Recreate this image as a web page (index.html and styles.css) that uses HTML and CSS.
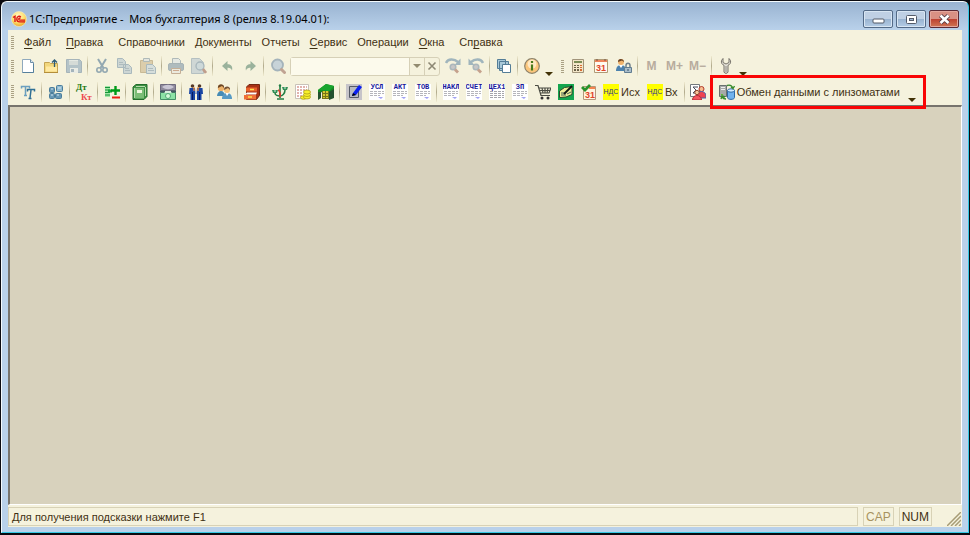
FILE: index.html
```html
<!DOCTYPE html>
<html lang="ru">
<head>
<meta charset="utf-8">
<title>1С:Предприятие - Моя бухгалтерия 8</title>
<link rel="stylesheet" href="styles.css">
</head>
<body>
<svg width="0" height="0" class="defs" aria-hidden="true">
  <symbol id="down" viewBox="0 0 8 4"><path d="M0 0h8L4 4z" fill="#423206"/></symbol>
  <symbol id="sheet" viewBox="0 0 16 16"><path d="M0 0h16v16H0z" fill="#fff"/><path d="M1 7.500h14M1 9.500h14M1 11.500h10" stroke="#b5b5bb" stroke-dasharray="3 1"/><path d="M9 13h5l-2 2z" fill="#a2a2f5"/></symbol>
</svg>
<div class="window">
  <header class="titlebar">
    <svg class="logo" viewBox="0 0 16 16" aria-hidden="true">
      <defs><radialGradient id="sun" cx=".45" cy=".3" r=".7"><stop offset="0" stop-color="#fff9c8"/><stop offset=".6" stop-color="#ffdf6b"/><stop offset="1" stop-color="#e8a52c"/></radialGradient></defs>
      <circle cx="8" cy="8" r="7.500" fill="url(#sun)" stroke="#f6eec8" stroke-width=".6"/>
      <path d="M2 6.500 4 5.200V11M9.800 6.200C8.600 4.600 5.800 5.200 5.800 8c0 2 1.400 2.900 2.900 2.900H14M9.500 7.400c-1-.7-2 .1-1.700 1 .2.600.7.700 1.300.700H14" fill="none" stroke="#dc1414" stroke-width="1.400"/>
    </svg>
    <h1 class="title">1С:Предприятие -&nbsp; Моя бухгалтерия 8 (релиз 8.19.04.01):</h1>
    <div class="winbuttons">
      <button class="winbtn" aria-label="Свернуть"><svg viewBox="0 0 28 16"><rect x="9" y="8" width="11" height="4" rx="1" fill="#fff" stroke="#535b69"/></svg></button>
      <button class="winbtn" aria-label="Развернуть"><svg viewBox="0 0 28 16"><rect x="9.500" y="4.500" width="10" height="8" rx="1" fill="#fff" stroke="#535b69"/><rect x="12.500" y="7.500" width="4" height="2" fill="#9bb5d3" stroke="#535b69"/></svg></button>
      <button class="winbtn close" aria-label="Закрыть"><svg viewBox="0 0 28 16"><path d="m10.500 4.500 8 7.500m0-7.500-8 7.500" stroke="#4f3a43" stroke-width="4.400"/><path d="m10.500 4.500 8 7.500m0-7.500-8 7.500" stroke="#fff" stroke-width="2.600"/></svg></button>
    </div>
  </header>

  <div class="client">
    <nav class="menubar" aria-label="Главное меню">
      <span class="grip"></span>
      <button class="menu wide"><u>Ф</u>айл</button>
      <button class="menu wide"><u>П</u>равка</button>
      <button class="menu">Справочники</button>
      <button class="menu">Документы</button>
      <button class="menu">Отчеты</button>
      <button class="menu"><u>С</u>ервис</button>
      <button class="menu">Операции</button>
      <button class="menu wide"><u>О</u>кна</button>
      <button class="menu">Сп<u>р</u>авка</button>
    </nav>

    <div class="toolbar" role="toolbar" aria-label="Стандартная">
      <span class="grip"></span>
      <button class="tool" aria-label="Новый"><svg viewBox="0 0 16 16"><path d="M2.500 1.500h8l3 3v10h-11z" fill="#fff" stroke="#8fa9bd"/><path d="M10.500 1.500v3h3" fill="#dceaf2" stroke="#6d8da5"/><path d="M2.500 14.500h11v-9" fill="none" stroke="#56809c"/></svg></button>
      <button class="tool" aria-label="Открыть"><svg viewBox="0 0 16 16"><path d="M1.500 4.500h5l1 1h7v9h-13z" fill="#f2d77c" stroke="#c4a352"/><path d="M3 8.500h11v5H3z" fill="#ffe9a1"/><path d="M1 14.500h14" stroke="#b48e3a"/><path d="M11.500 9V2M9 4.500 11.500 2 14 4.500" fill="none" stroke="#2d5c78" stroke-width="1.300"/></svg></button>
      <button class="tool off" aria-label="Сохранить"><svg viewBox="0 0 16 16"><path d="M.5 1.500h13l2 2v11H.5z" fill="#8aa4bb" stroke="#728ca4"/><path d="M3 2h9v5H3z" fill="#dbe4e8"/><path d="M3 4h9M3 6h9" stroke="#a5b5c0"/><path d="M4 10h8v5H4z" fill="#e4e9eb"/><path d="M5 11h3v3H5z" fill="#6f8ca7"/></svg></button>
      <span class="sep"></span>
      <button class="tool off" aria-label="Вырезать"><svg viewBox="0 0 16 16"><path d="m4 1 5.500 9M12 1 6.500 10" stroke="#527795" stroke-width="2"/><circle cx="5" cy="12" r="2.200" fill="none" stroke="#527795" stroke-width="1.600"/><circle cx="11" cy="12" r="2.200" fill="none" stroke="#527795" stroke-width="1.600"/></svg></button>
      <button class="tool off" aria-label="Копировать"><svg viewBox="0 0 16 16"><path d="M.5.500h5l3 3v6h-8zM6.500 6.500h5l3 3v6h-8z" fill="#b3c4cf" stroke="#7894a8"/><path d="M2 4.500h4M2 6.500h5M8 10.500h4M8 12.500h5" stroke="#8199aa"/></svg></button>
      <button class="tool off" aria-label="Вставить"><svg viewBox="0 0 16 16"><path d="M.5 2.500h12v12H.5z" fill="#cbb58a" stroke="#ad9668"/><path d="M3.500.5h6v3h-6z" fill="#d8dee0" stroke="#8295a0"/><path d="M6.500 6.500h6l3 3v6h-9z" fill="#c3d1da" stroke="#7894a8"/><path d="M8 10.500h5M8 12.500h6" stroke="#8199aa"/></svg></button>
      <span class="sep"></span>
      <button class="tool off" aria-label="Печать"><svg viewBox="0 0 16 16"><path d="M4.500.5h6l2 2v4h-8z" fill="#dbe3e6" stroke="#8194a1"/><rect x=".5" y="5.500" width="15" height="7" rx="1.500" fill="#8298a9" stroke="#748a9b"/><path d="M3.500 10.500h9v5h-9z" fill="#e6e5df" stroke="#a68468"/><path d="M5 12.500h6" stroke="#b37a5c"/></svg></button>
      <button class="tool off" aria-label="Просмотр"><svg viewBox="0 0 16 16"><path d="M.5.500h8l4 4v11H.5z" fill="#b7c6d0" stroke="#8ba0af"/><circle cx="9" cy="8" r="4" fill="#b5cad8" stroke="#758fa6" stroke-width="1.300"/><path d="m12 11 3 4" stroke="#9d6656" stroke-width="2.800"/></svg></button>
      <span class="sep"></span>
      <button class="tool off" aria-label="Отменить"><svg viewBox="0 0 16 16"><path d="M3 8 8.500 3v3.200c3.500-.2 5.500 2.300 4.500 6.300-.8-2-2.200-3-4.500-2.700V13z" fill="#5e8971"/></svg></button>
      <button class="tool off" aria-label="Повторить"><svg viewBox="0 0 16 16"><path d="M14 8 8.500 3v3.200C5 6 3 8.500 4 12.500c.8-2 2.200-3 4.500-2.700V13z" fill="#5e8971"/></svg></button>
      <span class="sep"></span>
      <button class="tool off" aria-label="Найти"><svg viewBox="0 0 16 16"><circle cx="7.500" cy="7" r="5.500" fill="#a9bfd5" stroke="#6f8aa5" stroke-width="1.800"/><path d="m11.500 11.500 3 3" stroke="#9e7062" stroke-width="3" stroke-linecap="round"/></svg></button>
      <div class="search">
        <input class="searchfield" type="text" aria-label="Строка поиска">
        <button class="searchbtn" aria-label="Список"><svg viewBox="0 0 14 16"><path d="M3 6h8L7 10z" fill="#928b70"/></svg></button>
        <button class="searchbtn" aria-label="Очистить"><svg viewBox="0 0 14 16"><path d="m3.500 4.500 7 7m0-7-7 7" stroke="#8d8874" stroke-width="1.600"/></svg></button>
      </div>
      <button class="tool off" aria-label="Найти далее"><svg viewBox="0 0 16 16"><path d="M1 5C3 .5 9 .5 13 4" fill="none" stroke="#688da8" stroke-width="2.400"/><path d="M15.500.5V7H9.500z" fill="#688da8"/><circle cx="8" cy="9" r="2.800" fill="#a9a9b8" stroke="#7990a5" stroke-width="1.500"/><path d="m10 11.500 3 3" stroke="#a66c58" stroke-width="2.800"/></svg></button>
      <button class="tool off" aria-label="Найти ранее"><svg viewBox="0 0 16 16"><path d="M15 5C13 .5 7 .5 3 4" fill="none" stroke="#688da8" stroke-width="2.400"/><path d="M.5.500V7h6z" fill="#688da8"/><circle cx="8" cy="9" r="2.800" fill="#a9a9b8" stroke="#7990a5" stroke-width="1.500"/><path d="m10 11.500 3 3" stroke="#a66c58" stroke-width="2.800"/></svg></button>
      <span class="sep"></span>
      <button class="tool" aria-label="Окна"><svg viewBox="0 0 16 16"><g fill="#a8c8d8" stroke="#547d97"><path d="M1.500 1.500h8v9h-8zM3.500 3.500h9v9h-9z"/><path d="M6.500 6.500h8v8h-8z" fill="#fff"/></g></svg></button>
      <span class="sep"></span>
      <button class="tool" aria-label="О программе"><svg viewBox="0 0 16 16"><circle cx="8" cy="8" r="7.300" fill="#fbc67c" stroke="#8d8269" stroke-width="1.200"/><circle cx="8" cy="6" r="4.500" fill="#ffe9c3"/><path d="M8 3v2M8 6.500v6" stroke="#47791b" stroke-width="2.200"/></svg></button>
      <button class="more" aria-label="Ещё"><svg><use href="#down"/></svg></button>
      <span class="grip second"></span>
      <button class="tool" aria-label="Калькулятор"><svg viewBox="0 0 16 16"><path d="M2.500 1.500h11v13h-11z" fill="#f3e6c8" stroke="#a1947a"/><path d="M4 4h8" stroke="#7a8c55" stroke-width="2"/><path d="M4 7h2v1H4zm3 0h2v1H7zM4 9h2v1H4zm3 0h2v1H7zM4 11h2v2H4zm3 0h2v2H7z" fill="#6a6048"/><path d="M10 7h2v1h-2zm0 2h2v1h-2zm0 2h2v2h-2z" fill="#d86b31"/></svg></button>
      <button class="tool" aria-label="Календарь"><svg viewBox="0 0 16 16"><path d="M1.500 1.500h13v13h-13z" fill="#fffaf0" stroke="#b09a76"/><path d="M2 3h12" stroke="#f0845b" stroke-width="2"/><path d="M4 1v2M12 1v2" stroke="#795744"/><text class="daynum" x="8" y="13">31</text></svg></button>
      <button class="tool" aria-label="Блокировка"><svg viewBox="0 0 16 16"><path d="M0 13c0-4 2-6 5-6s5 2 5 6z" fill="#4c82ae"/><path d="m3 7 2 3 2-3z" fill="#fff"/><circle cx="5" cy="4" r="3" fill="#f0b36c"/><path d="M2 4c-.5-4 6-4 6 0L6 2.500z" fill="#684326"/><path d="M10 9V7.500c0-3 4-3 4 0V9" fill="none" stroke="#71818b" stroke-width="1.500"/><path d="M8.500 9.500h7v5h-7z" fill="#aabdca" stroke="#617c90"/><path d="M12 11v2" stroke="#35556b"/></svg></button>
      <span class="sep"></span>
      <button class="tool mem">M</button>
      <button class="tool mem">M+</button>
      <button class="tool mem">M−</button>
      <span class="sep"></span>
      <button class="tool" aria-label="Настройка"><svg viewBox="0 0 16 16"><path d="M5 .5 3.500 2.500C3 5 4 6.500 6 7.300V14c.5 1.800 3.500 1.800 4 0V7.300c2-.8 3-2.300 2.500-4.800L11 .5v4L8 6 5 4.500z" fill="#e2e0d8" stroke="#77736a"/><path d="M8 8v6" stroke="#8c8980"/></svg></button>
      <button class="more" aria-label="Ещё"><svg><use href="#down"/></svg></button>
    </div>

    <div class="toolbar accounting" role="toolbar" aria-label="Бухгалтерия">
      <span class="grip"></span>
      <button class="tool" aria-label="План счетов"><svg viewBox="0 0 16 16"><path d="M1.500 4.500v-2h8v2M5.500 3v8M4 11.500h3" fill="none" stroke="#6b9fbf" stroke-width="1.500"/><path d="M7.500 7.500v-2h7v2M11 6 10 14M8.500 14.500h3" fill="none" stroke="#2f6f95" stroke-width="1.500"/></svg></button>
      <span class="sep"></span>
      <button class="tool" aria-label="Субконто"><svg viewBox="0 0 16 16"><g fill="#6798b5" stroke="#4a7d9b"><rect x="1.500" y="3.500" width="5" height="5" rx="1"/><rect x="8.500" y="1.500" width="6" height="6" rx="1" fill="#8fb9cf"/><rect x="1.500" y="9.500" width="5" height="5" rx="1"/><rect x="7.500" y="9.500" width="6" height="5" rx="1"/></g><path d="M3 5h2M3 11h2m4 0h2m-1-7h3" stroke="#d4e7ef"/></svg></button>
      <span class="sep"></span>
      <button class="tool" aria-label="Проводки"><svg class="accounts" viewBox="0 0 16 16"><text class="debit" x="0" y="6">Дт</text><text class="credit" x="5" y="16">Кт</text></svg></button>
      <span class="sep"></span>
      <button class="tool" aria-label="Операция"><svg viewBox="0 0 16 16"><path d="M1 2h5v11H1z" fill="#a1e7a4"/><path d="M1 3.500h5m-5 2.500h5m-5 2.500h5M1 11h5" stroke="#19913d"/><path d="M4 5.500h4v3H4z" fill="#16a839"/><path d="M7 6.500h9M11.500 2v9" stroke="#009b18" stroke-width="2.400"/><path d="M8 13.500h8" stroke="#ed2015" stroke-width="2"/></svg></button>
      <span class="sep"></span>
      <button class="tool" aria-label="Журнал"><svg viewBox="0 0 16 16"><path d="M1 3 4 .5h11v12l-3 3H1z" fill="#3c9143" stroke="#236c2b"/><path d="M3 4h9v10.500H3z" fill="#7bbd76"/><path d="M5 6h5v3H5z" fill="#eff7df"/><path d="M2.500 4v10M13.500 3v9M4 2.500h9" stroke="#b8dcae"/></svg></button>
      <span class="sep"></span>
      <button class="tool" aria-label="Банк и касса"><svg viewBox="0 0 16 16"><path d="M.5.500h15v6H.5z" fill="#8e899c" stroke="#706b7f"/><path d="M.5 8.500h15v7H.5z" fill="#8ce2a5" stroke="#469067"/><path d="M2 3c4-3 8-3 12 0-4 3-8 3-12 0z" fill="#c9c6d5"/><path d="M4 7h8v2H4z" fill="#d6efdb"/><circle cx="8" cy="12" r="2.500" fill="#d5fbd9" stroke="#53a777"/><path d="M0 7.500h5m6 0h5" stroke="#425660" stroke-width="2"/></svg></button>
      <span class="sep"></span>
      <button class="tool" aria-label="Сотрудники"><svg viewBox="0 0 16 16"><circle cx="4.500" cy="2" r="1.800" fill="#563827"/><circle cx="11.500" cy="2" r="1.800" fill="#563827"/><path d="M1.500 4H7l.5 6H7v6H2.500V10H1zM9 4h5.500l.5 6h-1.500v6H9v-6h-.5z" fill="#1a45a4"/><path d="M6 3v4m4-4v4" stroke="#f48a35" stroke-width="1.200"/><path d="M4.500 8v8m7-8v8" stroke="#06185b"/></svg></button>
      <span class="sep"></span>
      <button class="tool" aria-label="Контрагенты"><svg viewBox="0 0 16 16"><circle cx="5" cy="4" r="3.200" fill="#edb26a"/><path d="M2 4c-1-5 7-5 6 0L6 2z" fill="#6b4625"/><path d="M1 12c0-3 2-5 4-5s4 2 4 5z" fill="#468bb5"/><circle cx="11" cy="6" r="3" fill="#f3c27d"/><path d="M8 6c0-5 7-4 6 0l-2-2z" fill="#765236"/><path d="M6 15c0-4 2-6 5-6s5 2 5 6z" fill="#579ac4"/><path d="m9.500 9 1.500 3 2-3z" fill="#fff"/></svg></button>
      <span class="sep"></span>
      <button class="tool" aria-label="Картотека"><svg viewBox="0 0 16 16"><path d="M2.500 3 5 .5h10.500v11l-3 4h-10z" fill="#a83216" stroke="#742812"/><path d="M2 3.500h11v4H2z" fill="#e8612c"/><path d="M0 11h12v4.500H0z" fill="#f07038"/><path d="m1 10.500 2-2h10l-1 2z" fill="#fff"/><path d="M6 5.500h4m-6 7.500h4" stroke="#ffe34f" stroke-width="1.500"/></svg></button>
      <span class="sep"></span>
      <button class="tool" aria-label="Баланс"><svg viewBox="0 0 16 16"><path d="M8 2v12M5 15h7M3 6v3c0 2 3 3 5 3s5-2 5-6V3" fill="none" stroke="#237e44" stroke-width="1.600"/><path d="M0 6h6L5 9H1zm10-3h6l-1 3h-4z" fill="#338f57"/><path d="M2 7h2m8-3h2" stroke="#d6ece0"/><path d="M6 6c1 0 3 3 2 7" fill="none" stroke="#df392f" stroke-width="1.600"/><circle cx="8" cy="1.500" r="1.200" fill="#237e44"/></svg></button>
      <button class="tool" aria-label="Налоги"><svg viewBox="0 0 16 16"><path d="M.5.500h13v14H.5z" fill="#fff" stroke="#c9c2b8"/><path d="M2 3h10M2 6h10M2 9h6M2 12h5" stroke="#d89a94" stroke-width="1.600" stroke-dasharray="2 1"/><g fill="#f8f029" stroke="#a59511" stroke-width=".7"><ellipse cx="8.500" cy="13.500" rx="3" ry="1.800"/><ellipse cx="12" cy="13" rx="3.500" ry="2"/><ellipse cx="12" cy="10.500" rx="3.500" ry="2"/><ellipse cx="12" cy="8" rx="3.500" ry="2"/></g></svg></button>
      <button class="tool" aria-label="Склад"><svg viewBox="0 0 16 16"><path d="m0 6 8-6 8 2v12H4V8l-4 2z" fill="#148a25"/><path d="m0 6 8-6 8 2-5 5z" fill="#18a52e"/><path d="M0 8h3v6l-3 2zm11 0 5-3v9l-5 2z" fill="#23512f"/><path d="M4 7h7v8H4z" fill="#77751a"/><path d="M6 7v7m3-7v7" stroke="#f2e83a" stroke-width="1.500" stroke-dasharray="2 1"/></svg></button>
      <span class="sep"></span>
      <button class="tool" aria-label="Ввод документа"><svg viewBox="0 0 16 16"><path d="M0 0h16v16H0z" fill="#c6c4c9"/><path d="M3.500 2.500h9v11h-9z" fill="#b7bac1" stroke="#545965"/><path d="m7 9 6-8 3 2-6 8-4 1z" fill="#0920f1"/><path d="m6 12 1-3 3 2z" fill="#000"/></svg></button>
      <button class="tool" aria-label="Услуги"><svg viewBox="0 0 16 16"><use href="#sheet"/><text class="doc" x="8" y="5">УСЛ</text></svg></button>
      <button class="tool" aria-label="Акт"><svg viewBox="0 0 16 16"><use href="#sheet"/><text class="doc" x="8" y="5">АКТ</text></svg></button>
      <button class="tool" aria-label="Товары"><svg viewBox="0 0 16 16"><use href="#sheet"/><text class="doc" x="8" y="5">ТОВ</text></svg></button>
      <span class="sep"></span>
      <button class="tool" aria-label="Накладная"><svg viewBox="0 0 16 16"><use href="#sheet"/><text class="doc" x="8" y="5">НАКЛ</text></svg></button>
      <button class="tool" aria-label="Счет"><svg viewBox="0 0 16 16"><use href="#sheet"/><text class="doc" x="8" y="5">СЧЕТ</text></svg></button>
      <button class="tool" aria-label="Цех"><svg viewBox="0 0 16 16"><path d="M0 0h16v16H0z" fill="#fff"/><text class="doc" x="8" y="5">ЦЕХ1</text><path d="M1 7.500h14M1 9.500h14M1 11.500h14M1 13.500h14" stroke="#a5a5ac" stroke-dasharray="3 1"/></svg></button>
      <button class="tool" aria-label="Зарплата"><svg viewBox="0 0 16 16"><use href="#sheet"/><text class="doc" x="8" y="5">ЗП</text></svg></button>
      <button class="tool" aria-label="Покупки"><svg viewBox="0 0 16 16"><path d="M0 1.500h3l3 10h9M4 4h12l-2 5H5M4.500 6.500H15M7 4l1 5m2-5v5m3-5-1 5" fill="none" stroke="#4a4b42" stroke-width="1.200"/><circle cx="7" cy="14" r="1.500" fill="#333"/><circle cx="13" cy="14" r="1.500" fill="#333"/></svg></button>
      <button class="tool" aria-label="Книга"><svg viewBox="0 0 16 16"><path d="M0 0h16v16H0z" fill="#14a54e"/><path d="m1.500 7 5-3.500 7.500-1v8L8 13l-6.500.5z" fill="#f0ef99" stroke="#2c4a2c"/><path d="M3 9h5m-5 2h5m1-1 4-2" stroke="#49605a"/><path d="m6 10 8-8" stroke="#101c15" stroke-width="2"/></svg></button>
      <button class="tool" aria-label="Закрытие месяца"><svg viewBox="0 0 16 16"><path d="M2.500 2.500h12v13h-12z" fill="#fff4df" stroke="#b5987c"/><path d="M8 4h6" stroke="#f4844e" stroke-width="2"/><text class="daynum" x="9" y="14">31</text><path d="m1 3 3 3 5-5" fill="none" stroke="#28922b" stroke-width="2.800"/></svg></button>
      <button class="tool vat"><span class="tag">НДС</span>Исх</button>
      <button class="tool vat"><span class="tag">НДС</span>Вх</button>
      <span class="sep"></span>
      <button class="tool" aria-label="Отчеты сотрудников"><svg viewBox="0 0 16 16"><path d="M.5.500h9v12h-9z" fill="#fff" stroke="#73787c"/><path d="M8 3H3l3 3-3 3h5" fill="none" stroke="#474b5a"/><circle cx="11.500" cy="5" r="2.500" fill="#f6bd90" stroke="#b23a2a"/><path d="M7 12c0-6 9-6 9 0v2H8z" fill="#ee4250" stroke="#4863aa"/><circle cx="7" cy="8.500" r="2.200" fill="#f8c49c" stroke="#92452b"/><path d="M2.500 16c0-6 9-6 9 0z" fill="#f35560" stroke="#b82935"/></svg></button>
      <span class="sep"></span>
      <div class="exchange">
        <button class="tool exchangebtn"><svg viewBox="0 0 16 16"><path d="M.5 1.500h7v11h-7z" fill="#a7aaa8" stroke="#6a716e"/><path d="M2 3.500h4M2 5.500h4" stroke="#eee"/><path d="M2 10h2v1H2z" fill="#5cbf35"/><path d="M8.500 6.500v7c0 2.500 7 2.500 7 0v-7z" fill="#71b2ed" stroke="#2e6aa5"/><ellipse cx="12" cy="6.500" rx="3.500" ry="1.700" fill="#d2ebff" stroke="#2e6aa5"/><path d="M8 1.500c3-1 5 0 6 3M12 3l2 1.500L15.500 2M7 15c-2 0-3-.5-4-2m-1 2 1-3 3 1" fill="none" stroke="#388c2b" stroke-width="1.400"/></svg>Обмен данными с линзоматами</button>
        <button class="more" aria-label="Ещё"><svg><use href="#down"/></svg></button>
      </div>
    </div>

    <main class="workspace"></main>

    <footer class="statusbar">
      <span class="hint">Для получения подсказки нажмите F1</span>
      <span class="key inactive">CAP</span>
      <span class="key">NUM</span>
      <svg class="resize" viewBox="0 0 14 14" aria-hidden="true"><path d="M0 14 14 0M4 14 14 4M8 14l6-6M12 14l2-2" stroke="#a79c75" stroke-width="1.500"/></svg>
    </footer>
  </div>
</div>
</body>
</html>
```
FILE: styles.css
```css
* { box-sizing: border-box; }

html { background: #0a0a10; }

body {
  margin: 0;
  min-height: 100vh;
  display: flex;
  padding: 1px 1px 2px;
  font: 11px/16px "Liberation Sans", Roboto, sans-serif;
  color: #3f3012;
}

button {
  border: 0;
  padding: 0;
  background: none;
  font: inherit;
  color: inherit;
  white-space: nowrap;
}

svg { display: block; flex: none; }
.defs { position: absolute; }

.window {
  flex: 1;
  min-width: 0;
  display: flex;
  flex-direction: column;
  padding: 0 6px 5px;
  border: 1px solid #f4fafd;
  border-right-color: #35c8e4;
  border-bottom-color: #35c8e4;
  border-radius: 6px 6px 0 0;
  background: linear-gradient(#99b3d1, #b9d1ea 28px);
}

.titlebar {
  display: flex;
  align-items: center;
  height: 28px;
  padding: 5px 3px 0;
}

.logo { width: 16px; height: 16px; margin-right: 2px; }

.title {
  flex: 1;
  margin: 0;
  font: 11px/16px "Noto Sans", "Open Sans", sans-serif;
  color: #000;
}

.winbuttons { display: flex; gap: 3px; }

.winbtn {
  width: 30px;
  height: 18px;
  border: 1px solid #536a87;
  border-radius: 2px;
  box-shadow: inset 0 0 0 1px #d8e6f3;
  background: linear-gradient(#bfd0e4 50%, #98b3d0 50%, #b4cce5);
}

.winbtn svg { width: 28px; height: 16px; }

.close {
  border-color: #5b2934;
  box-shadow: inset 0 0 0 1px #e3a79d;
  background: linear-gradient(#d99083 50%, #bd4030 50%, #cf7654);
}

.client {
  flex: 1;
  display: flex;
  flex-direction: column;
  background: #f5f2dd;
}

.menubar, .toolbar {
  display: flex;
  align-items: center;
  padding-left: 3px;
}

.menubar { height: 24px; }
.toolbar { height: 24px; }
.accounting { height: 27px; }

.grip {
  width: 3px;
  height: 13px;
  margin-right: 2px;
  background: repeating-linear-gradient(#aaa184 0 1px, #f5f2dd 1px 2px);
}

.second { margin-left: 6px; }

.menu { padding: 0 5px; }
.menu:first-of-type { margin-left: 3px; }
.wide { padding-right: 10px; }
.menu u { text-underline-offset: 2px; }

.tool {
  display: flex;
  align-items: center;
  justify-content: center;
  min-width: 23px;
  height: 24px;
}

.tool svg { width: 16px; height: 16px; }
.tool .accounts { overflow: visible; }
.off svg { opacity: .6; }

.sep {
  width: 1px;
  height: 20px;
  margin: 0 2px;
  background: linear-gradient(#f0ebd0, #b1aa8c, #f0ebd0);
}

.more {
  align-self: flex-end;
  width: 12px;
  height: 9px;
}

.more svg { width: 8px; height: 4px; margin: 0 auto; }

.search {
  display: flex;
  width: 150px;
  height: 19px;
  margin: 0 1px;
  border: 1px solid #d6d0b7;
  border-radius: 3px;
}

.searchfield {
  flex: 1;
  min-width: 0;
  border: 0;
  padding: 0 4px;
  background: #fcfaec;
  font: inherit;
}

.searchbtn { width: 15px; border-left: 1px solid #d6d0b7; }
.searchbtn svg { width: 14px; height: 16px; }

.mem {
  font: bold 12px/16px "Liberation Sans", sans-serif;
  color: #b8ac9e;
}

.daynum { font: bold 9px "Liberation Sans", sans-serif; text-anchor: middle; fill: #df4529; }
.debit { font: bold 9px "Liberation Serif", serif; fill: #237810; }
.credit { font: bold 9px "Liberation Serif", serif; fill: #ed484b; }
.doc { font: bold 7px "Liberation Mono", monospace; text-anchor: middle; fill: #17179b; }

.vat { gap: 2px; padding: 0 4px 0 3px; }

.tag {
  width: 16px;
  height: 16px;
  background: #ff0;
  font: 7px/16px "Liberation Sans", sans-serif;
  color: #30308c;
}

.exchange { position: relative; display: flex; height: 26px; }

.exchange::after {
  content: "";
  position: absolute;
  inset: -4px -8px -4px -5px;
  border: 3px solid #f90505;
  pointer-events: none;
}

.exchangebtn { gap: 2px; padding: 0 6px 0 4px; height: 26px; }

.workspace {
  flex: 1;
  border: solid;
  border-width: 2px 1px 1px 2px;
  border-color: #77746d #fff #fff #77746d;
  background: #d8d2bd;
}

.statusbar {
  display: flex;
  align-items: stretch;
  gap: 5px;
  height: 22px;
  padding: 2px 1px 1px 0;
}

.hint, .key { border: 1px solid #d8d2b6; padding: 1px 3px; }
.hint { flex: 1; }
.key { min-width: 30px; padding: 1px 2px; font-size: 12px; }
.inactive { color: #a8935f; }
.resize { width: 14px; height: 14px; margin-left: 10px; align-self: flex-end; }
```
